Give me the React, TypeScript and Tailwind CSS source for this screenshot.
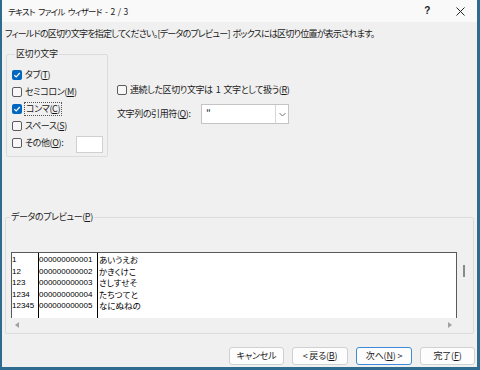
import React from "react";

const U = ({ c }: { c: string }) => <span className="underline underline-offset-[1px]">{c}</span>;

const Box = ({ checked }: { checked?: boolean }) =>
  checked ? (
    <span className="w-[10px] h-[10px] rounded-[2px] bg-[#0067c0] flex items-center justify-center shrink-0">
      <svg width="8" height="8" viewBox="0 0 8 8">
        <path d="M1.3 4.2 L3.2 6 L6.8 2" fill="none" stroke="#fff" strokeWidth="1.2" />
      </svg>
    </span>
  ) : (
    <span className="w-[10px] h-[10px] rounded-[2px] border border-[#5c5c5c] bg-[#f7f7f7] shrink-0" />
  );

const rows = [
  ["1", "000000000001", "あいうえお"],
  ["12", "000000000002", "かきくけこ"],
  ["123", "000000000003", "さしすせそ"],
  ["1234", "000000000004", "たちつてと"],
  ["12345", "000000000005", "なにぬねの"],
];

export default function App() {
  return (
    <div className="w-[480px] h-[370px] flex flex-col bg-[#f0f0f0] border-l-2 border-r-[3px] border-b-[3px] border-[#2f6a8f] text-[#1a1a1a] text-[9px] tracking-[-0.4px] [word-spacing:1.5px] font-['Noto_Sans_CJK_JP',sans-serif] [font-feature-settings:'palt'] overflow-hidden">
      {/* title bar */}
      <div className="h-[22px] shrink-0 bg-[#f9f9f9] flex items-center pl-[6px] pr-[12px]">
        <span className="leading-[12px] text-[8.5px] tracking-[-0.7px] [word-spacing:2px] whitespace-pre">テキスト ファイル ウィザード - 2 / 3</span>
        <span className="ml-auto mr-[26px] text-[10px] font-bold leading-[12px] font-['Liberation_Sans',sans-serif]">?</span>
        <svg width="9" height="9" viewBox="0 0 9 9">
          <path d="M0.5 0.5 L8.5 8.5 M8.5 0.5 L0.5 8.5" stroke="#222" strokeWidth="1" />
        </svg>
      </div>

      <div className="flex-1 flex flex-col px-[3px]">
        <div className="mt-[5px] leading-[14px] whitespace-nowrap tracking-[-0.78px]">
          フィールドの区切り文字を指定してください。[データのプレビュー] ボックスには区切り位置が表示されます。
        </div>

        <div className="flex mt-[7px]">
          <fieldset className="ml-[1px] w-[102px] h-[109px] border border-[#dcdcdc] rounded-[2px] pl-[5px] pt-[6px]">
            <legend className="ml-[3px] px-[1px] leading-[12px]">区切り文字</legend>
            <div className="flex flex-col">
              <label className="h-[17px] flex items-center gap-[3px]">
                <Box checked />
                <span>タブ(<U c="T" />)</span>
              </label>
              <label className="h-[17px] flex items-center gap-[3px]">
                <Box />
                <span>セミコロン(<U c="M" />)</span>
              </label>
              <label className="h-[17px] flex items-center gap-[2px]">
                <Box checked />
                <span className="border border-dotted border-[#555] px-[1px] leading-[12px]">コンマ(<U c="C" />)</span>
              </label>
              <label className="h-[17px] flex items-center gap-[3px]">
                <Box />
                <span>スペース(<U c="S" />)</span>
              </label>
              <label className="h-[17px] flex items-center gap-[3px]">
                <Box />
                <span>その他(<U c="O" />):</span>
                <span className="ml-auto mr-[4px] mt-[3px] w-[27px] h-[17px] bg-white border border-[#d0d0d0]" />
              </label>
            </div>
          </fieldset>

          <div className="ml-[9px] flex flex-col">
            <label className="mt-[33px] h-[17px] flex items-center gap-[3px]">
              <Box />
              <span className="whitespace-pre">連続した区切り文字は 1 文字として扱う(<U c="R" />)</span>
            </label>
            <div className="mt-[6px] flex items-center">
              <span className="w-[84px]">文字列の引用符(<U c="Q" />):</span>
              <div className="w-[88px] h-[20px] bg-white border border-[#c4c4c4] flex items-stretch">
                <span className="flex-1 pl-[4px] leading-[16px] text-[10px]">"</span>
                <span className="w-[13px] border-l border-[#d6d6d6] flex items-center justify-center">
                  <svg width="7" height="5" viewBox="0 0 7 5">
                    <path d="M0.5 1 L3.5 4 L6.5 1" fill="none" stroke="#777" strokeWidth="1" />
                  </svg>
                </span>
              </div>
            </div>
          </div>
        </div>

        <fieldset className="mt-[54px] w-[469px] h-[123px] border border-[#dcdcdc] rounded-[2px]">
          <legend className="ml-[4px] px-[1px] leading-[12px]">データのプレビュー(<U c="P" />)</legend>
          <div className="flex mt-[29px] ml-[5px]">
            <div className="w-[446px] h-[66px] bg-white border-t border-l border-r border-[#5a5a5a] flex text-[8px] tracking-normal [word-spacing:0px] leading-[11.5px] font-['Liberation_Sans','Noto_Sans_CJK_JP',sans-serif] text-black">
              <div className="w-[27px] border-r border-black pt-[1px] flex flex-col">
                {rows.map((r) => (
                  <span key={r[0]}>{r[0]}</span>
                ))}
              </div>
              <div className="w-[59px] border-r border-black pt-[1px] flex flex-col">
                {rows.map((r) => (
                  <span key={r[1]}>{r[1]}</span>
                ))}
              </div>
              <div className="flex-1 pt-[1px] pl-[1px] flex flex-col text-[8.5px] font-['Noto_Sans_CJK_JP',sans-serif]">
                {rows.map((r) => (
                  <span key={r[2]}>{r[2]}</span>
                ))}
              </div>
            </div>
            <span className="ml-[6px] mt-[13px] w-[2px] h-[12px] bg-[#8a8a8a]" />
          </div>
          <div className="flex items-center ml-[9px] w-[437px] mt-[3px] h-[8px]">
            <svg width="4" height="6" viewBox="0 0 4 6">
              <path d="M4 0 L0 3 L4 6 Z" fill="#a0a0a0" />
            </svg>
            <svg className="ml-auto" width="4" height="6" viewBox="0 0 4 6">
              <path d="M0 0 L4 3 L0 6 Z" fill="#a0a0a0" />
            </svg>
          </div>
        </fieldset>

        <div className="mt-[13px] flex justify-end gap-[8px] -mr-[1px] tracking-[-0.2px]">
          <button className="w-[55px] h-[18px] bg-[#fdfdfd] border border-[#d0d0d0] rounded-[3px] text-[9px] leading-[16px]">キャンセル</button>
          <button className="w-[56px] h-[18px] bg-[#fdfdfd] border border-[#d0d0d0] rounded-[3px] text-[9px] leading-[16px] whitespace-pre">&lt; 戻る(<U c="B" />)</button>
          <button className="w-[56px] h-[18px] bg-[#fdfdfd] border border-[#3c8ad8] rounded-[3px] text-[9px] leading-[16px] whitespace-pre">次へ(<U c="N" />) &gt;</button>
          <button className="w-[55px] h-[18px] bg-[#fdfdfd] border border-[#d0d0d0] rounded-[3px] text-[9px] leading-[16px]">完了(<U c="F" />)</button>
        </div>
      </div>
    </div>
  );
}
